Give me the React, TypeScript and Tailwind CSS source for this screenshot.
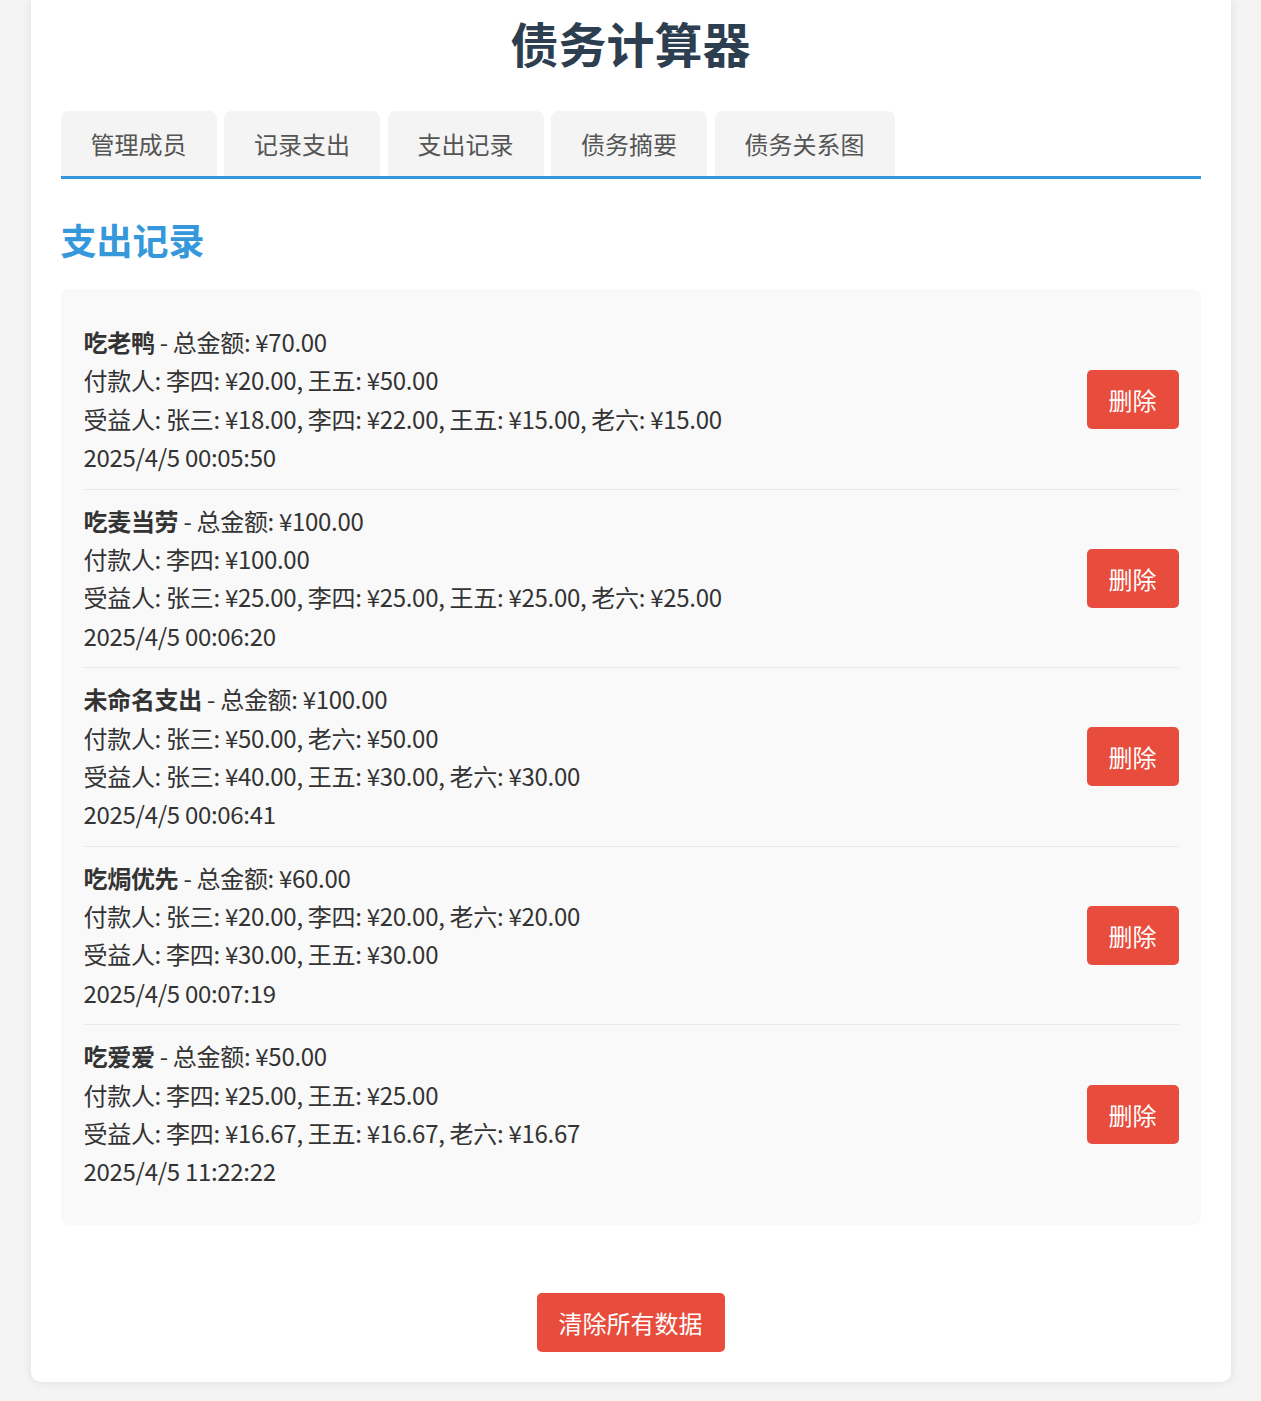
type Share = { name: string; amount: number };

type Expense = {
  title: string;
  total: number;
  payers: Share[];
  beneficiaries: Share[];
  time: string;
};

const tabs = ["管理成员", "记录支出", "支出记录", "债务摘要", "债务关系图"];

const expenses: Expense[] = [
  {
    title: "吃老鸭",
    total: 70,
    payers: [
      { name: "李四", amount: 20 },
      { name: "王五", amount: 50 },
    ],
    beneficiaries: [
      { name: "张三", amount: 18 },
      { name: "李四", amount: 22 },
      { name: "王五", amount: 15 },
      { name: "老六", amount: 15 },
    ],
    time: "2025/4/5 00:05:50",
  },
  {
    title: "吃麦当劳",
    total: 100,
    payers: [{ name: "李四", amount: 100 }],
    beneficiaries: [
      { name: "张三", amount: 25 },
      { name: "李四", amount: 25 },
      { name: "王五", amount: 25 },
      { name: "老六", amount: 25 },
    ],
    time: "2025/4/5 00:06:20",
  },
  {
    title: "未命名支出",
    total: 100,
    payers: [
      { name: "张三", amount: 50 },
      { name: "老六", amount: 50 },
    ],
    beneficiaries: [
      { name: "张三", amount: 40 },
      { name: "王五", amount: 30 },
      { name: "老六", amount: 30 },
    ],
    time: "2025/4/5 00:06:41",
  },
  {
    title: "吃焗优先",
    total: 60,
    payers: [
      { name: "张三", amount: 20 },
      { name: "李四", amount: 20 },
      { name: "老六", amount: 20 },
    ],
    beneficiaries: [
      { name: "李四", amount: 30 },
      { name: "王五", amount: 30 },
    ],
    time: "2025/4/5 00:07:19",
  },
  {
    title: "吃爱爱",
    total: 50,
    payers: [
      { name: "李四", amount: 25 },
      { name: "王五", amount: 25 },
    ],
    beneficiaries: [
      { name: "李四", amount: 16.67 },
      { name: "王五", amount: 16.67 },
      { name: "老六", amount: 16.67 },
    ],
    time: "2025/4/5 11:22:22",
  },
];

const fmt = (list: Share[]) =>
  list.map((s) => `${s.name}: ¥${s.amount.toFixed(2)}`).join(", ");

const ExpenseItem: React.FC<{ expense: Expense }> = ({ expense }) => {
  return (
    <div className="flex items-center justify-between py-3 border-b border-[#eaeaea] last:border-b-0">
      <div className="leading-[1.6] tracking-[-0.3px] pl-px">
        <div>
          <strong className="font-bold">{expense.title}</strong> - 总金额: ¥
          {expense.total.toFixed(2)}
        </div>
        <div>付款人: {fmt(expense.payers)}</div>
        <div>受益人: {fmt(expense.beneficiaries)}</div>
        <div>{expense.time}</div>
      </div>
      <button className="bg-[#e74c3c] text-white px-[22px] py-[10px] leading-[39px] rounded-[5px]">
        删除
      </button>
    </div>
  );
};

export default function App() {
  return (
    <div className="min-h-screen bg-[#f4f4f4] pb-[19px] font-['Noto_Sans_CJK_SC',sans-serif] text-[24px] text-[#333]">
      <div className="max-w-[1200px] mx-auto bg-white rounded-b-[10px] shadow-[0_0_10px_rgba(0,0,0,0.1)] px-[30px] pt-[13px] pb-[30px]">
        <h1 className="text-[48px] leading-[58px] font-bold text-center text-[#2c3e50]">
          债务计算器
        </h1>

        <div className="mt-[40px] flex gap-[7.5px] border-b-[3px] border-[#3498db]">
          {tabs.map((t) => (
            <button
              key={t}
              className="bg-[#f4f4f4] text-[#555] px-[30px] py-[15px] leading-[35px] rounded-t-[8px]"
            >
              {t}
            </button>
          ))}
        </div>

        <h2 className="mt-[39px] text-[36px] leading-[43px] font-bold text-[#3498db]">
          支出记录
        </h2>

        <div className="mt-[28px] bg-[#f9f9f9] rounded-[8px] p-[22px]">
          {expenses.map((e) => (
            <ExpenseItem key={e.time} expense={e} />
          ))}
        </div>

        <div className="mt-[68px] flex justify-center">
          <button className="bg-[#e74c3c] text-white px-[22px] py-[10px] leading-[39px] rounded-[5px]">
            清除所有数据
          </button>
        </div>
      </div>
    </div>
  );
}
